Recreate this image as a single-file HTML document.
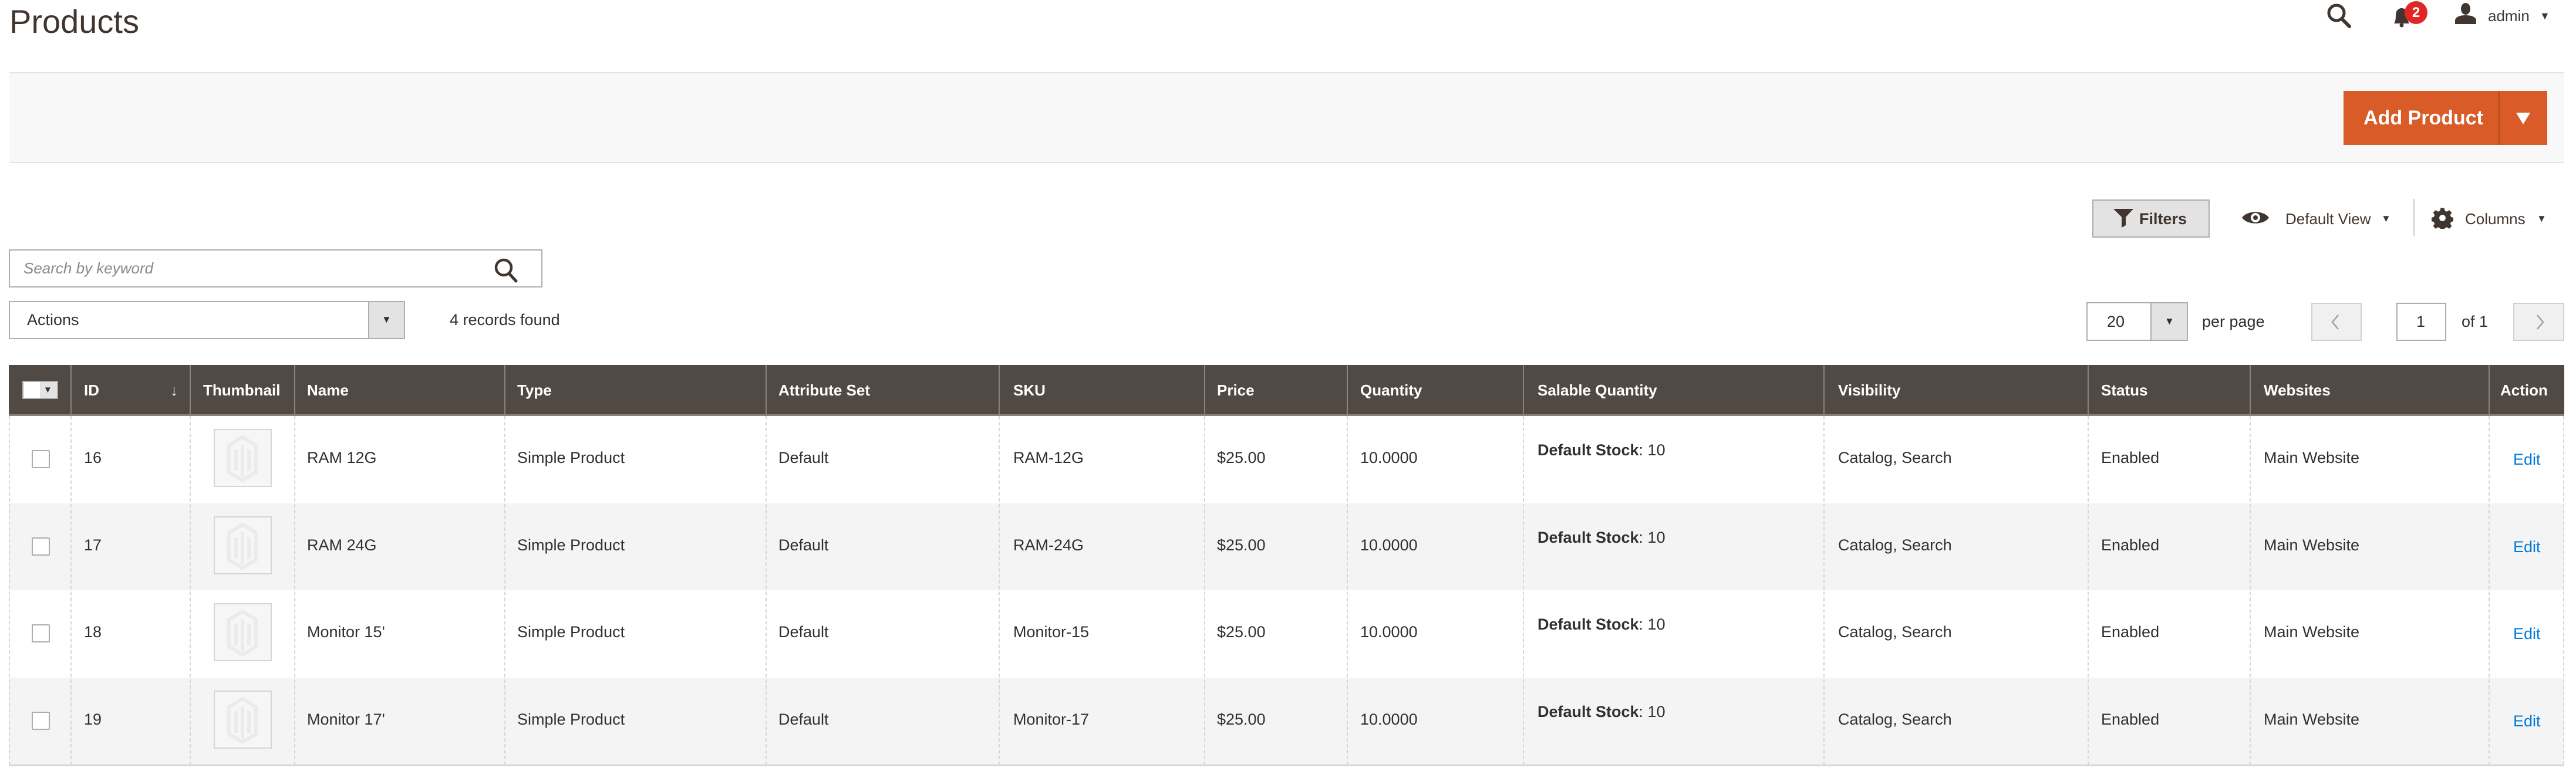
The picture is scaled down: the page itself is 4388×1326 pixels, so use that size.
<!DOCTYPE html>
<html><head><meta charset="utf-8"><style>
*{margin:0;padding:0;box-sizing:border-box}
body{width:4388px;height:1326px;background:#fff;position:relative;overflow:hidden;font-family:"Liberation Sans",Arial,sans-serif;color:#303030;font-size:27px}
.a{position:absolute}
.t{position:absolute;height:40px;line-height:40px;white-space:nowrap}
.hd{color:#fff;font-weight:bold;font-size:26px}
.row{position:absolute;left:15px;width:4353px;height:149px}
.row .t{top:51px}
.cb{position:absolute;left:39px;top:58px;width:31px;height:31px;border:2px solid #adadad;background:#fff;border-radius:2px}
.th{position:absolute;left:349px;top:22px;width:99px;height:99px;border:2px solid #d6d6d6;background:#f6f6f6}
.vl{position:absolute;top:709px;height:595px;border-left:2px dashed #d6d6d6}
.hl{position:absolute;top:622px;height:87px;width:2px;background:#8a837e}
</style></head><body>
<div class="t" style="left:16px;top:4px;height:66px;line-height:66px;font-size:56px;color:#41362f">Products</div>

<!-- top icons -->
<svg class="a" style="left:3962px;top:4px" width="46" height="44" viewBox="0 0 46 44"><circle cx="18" cy="18" r="13" fill="none" stroke="#41362f" stroke-width="5"/><path d="M27 28 L40 41" stroke="#41362f" stroke-width="6" stroke-linecap="round"/></svg>
<svg class="a" style="left:4072px;top:10px" width="40" height="38" viewBox="0 0 40 38"><path d="M6 30 C9 26 9 20 9 15 C9 8 14 4 19 4 C24 4 29 8 29 15 C29 20 29 26 32 30 Z" fill="#41362f"/><circle cx="19" cy="33" r="3.5" fill="#41362f"/></svg>
<div class="a" style="left:4096px;top:2px;width:39px;height:39px;border-radius:50%;background:#e22626;color:#fff;font-weight:bold;font-size:24px;text-align:center;line-height:39px">2</div>
<svg class="a" style="left:4180px;top:5px" width="40" height="36" viewBox="0 0 40 36"><ellipse cx="20" cy="10" rx="8" ry="10" fill="#41362f"/><path d="M2 36 L2 30 C2 24 10 21 20 21 C30 21 38 24 38 30 L38 36 Z" fill="#41362f"/></svg>
<div class="t" style="left:4238px;top:7px;font-size:26px;color:#41362f">admin</div>
<div class="t" style="left:4326px;top:7px;font-size:18px;color:#41362f">▼</div>

<!-- gray bar -->
<div class="a" style="left:16px;top:123px;width:4352px;height:155px;background:#f8f8f8;border-top:2px solid #e3e3e3;border-bottom:2px solid #e3e3e3"></div>
<div class="a" style="left:3992px;top:155px;width:347px;height:92px;background:#d85b28"></div>
<div class="a" style="left:4256px;top:155px;width:2px;height:92px;background:#b44a1e"></div>
<div class="t" style="left:4026px;top:181px;color:#fff;font-weight:bold;font-size:34px">Add Product</div>
<svg class="a" style="left:4286px;top:192px" width="24" height="20" viewBox="0 0 24 20"><path d="M0 0 H24 L12 20 Z" fill="#fff"/></svg>

<!-- toolbar right -->
<div class="a" style="left:3564px;top:340px;width:200px;height:65px;background:#e3e3e3;border:2px solid #adadad"></div>
<svg class="a" style="left:3600px;top:356px" width="35" height="32" viewBox="0 0 35 32"><path d="M0 0 H34 L21 14 V28 L14 32 V14 Z" fill="#41362f"/></svg>
<div class="t" style="left:3644px;top:353px;font-size:27px;font-weight:bold;color:#41362f">Filters</div>
<svg class="a" style="left:3818px;top:356px" width="48" height="30" viewBox="0 0 48 30"><path d="M1 15 C10 2 38 2 47 15 C38 28 10 28 1 15 Z" fill="#41362f"/><circle cx="24" cy="15" r="8" fill="#fff"/><circle cx="24" cy="15" r="4" fill="#41362f"/></svg>
<div class="t" style="left:3893px;top:353px;font-size:26px;color:#41362f">Default View</div>
<div class="t" style="left:4056px;top:353px;font-size:17px;color:#41362f">▼</div>
<div class="a" style="left:4111px;top:339px;width:2px;height:63px;background:#ccc"></div>
<svg class="a" style="left:4142px;top:353px" width="37" height="37" viewBox="0 0 24 24"><path fill="#41362f" d="M10 1h4l.6 3 2.3 1 2.6-1.7 2.8 2.8-1.7 2.6 1 2.3 3 .6v4l-3 .6-1 2.3 1.7 2.6-2.8 2.8-2.6-1.7-2.3 1-.6 3h-4l-.6-3-2.3-1-2.6 1.7-2.8-2.8 1.7-2.6-1-2.3-3-.6v-4l3-.6 1-2.3-1.7-2.6 2.8-2.8 2.6 1.7 2.3-1zM12 8.5a3.5 3.5 0 1 0 0 7 3.5 3.5 0 1 0 0-7z"/></svg>
<div class="t" style="left:4199px;top:353px;font-size:26px;color:#41362f">Columns</div>
<div class="t" style="left:4321px;top:353px;font-size:17px;color:#41362f">▼</div>

<!-- search -->
<div class="a" style="left:15px;top:425px;width:909px;height:65px;border:2px solid #adadad;background:#fff"></div>
<div class="t" style="left:40px;top:437px;font-style:italic;color:#8a8a8a;font-size:26px">Search by keyword</div>
<svg class="a" style="left:838px;top:438px" width="48" height="44" viewBox="0 0 46 44"><circle cx="19" cy="18" r="13" fill="none" stroke="#41362f" stroke-width="4.5"/><path d="M28 28 L40 41" stroke="#41362f" stroke-width="5" stroke-linecap="round"/></svg>

<!-- actions -->
<div class="a" style="left:15px;top:513px;width:675px;height:65px;border:2px solid #adadad;background:#fff"></div>
<div class="a" style="left:627px;top:515px;width:61px;height:61px;background:#e3e3e3;border-left:2px solid #adadad"></div>
<div class="t" style="left:46px;top:525px;font-size:27px">Actions</div>
<div class="t" style="left:650px;top:525px;font-size:17px">▼</div>
<div class="t" style="left:766px;top:525px;font-size:27px">4 records found</div>

<!-- pager -->
<div class="a" style="left:3554px;top:515px;width:173px;height:66px;border:2px solid #adadad;background:#fff"></div>
<div class="a" style="left:3663px;top:517px;width:62px;height:62px;background:#e3e3e3;border-left:2px solid #adadad"></div>
<div class="t" style="left:3589px;top:528px;font-size:27px">20</div>
<div class="t" style="left:3687px;top:528px;font-size:17px">▼</div>
<div class="t" style="left:3751px;top:528px;font-size:27px">per page</div>
<div class="a" style="left:3937px;top:516px;width:86px;height:65px;border:2px solid #d1d1d1;background:#f0f0f0"></div>
<svg class="a" style="left:3970px;top:536px" width="16" height="26" viewBox="0 0 16 26"><path d="M13 1 L3 13 L13 25" fill="none" stroke="#a0a0a0" stroke-width="2.5"/></svg>
<div class="a" style="left:4082px;top:516px;width:85px;height:65px;border:2px solid #adadad;background:#fff"></div>
<div class="t" style="left:4116px;top:528px;font-size:27px">1</div>
<div class="t" style="left:4193px;top:528px;font-size:27px">of 1</div>
<div class="a" style="left:4281px;top:516px;width:87px;height:65px;border:2px solid #d1d1d1;background:#f0f0f0"></div>
<svg class="a" style="left:4319px;top:536px" width="16" height="26" viewBox="0 0 16 26"><path d="M3 1 L13 13 L3 25" fill="none" stroke="#a0a0a0" stroke-width="2.5"/></svg>

<!-- table header -->
<div class="a" style="left:15px;top:622px;width:4353px;height:87px;background:#514943;border-bottom:3px solid #8a8078"></div>
<div class="hl" style="left:120px"></div><div class="hl" style="left:323px"></div><div class="hl" style="left:501px"></div><div class="hl" style="left:859px"></div><div class="hl" style="left:1304px"></div><div class="hl" style="left:1701px"></div><div class="hl" style="left:2051px"></div><div class="hl" style="left:2294px"></div><div class="hl" style="left:2594px"></div><div class="hl" style="left:3106px"></div><div class="hl" style="left:3556px"></div><div class="hl" style="left:3832px"></div><div class="hl" style="left:4239px"></div>
<div class="a" style="left:38px;top:649px;width:61px;height:31px;background:#fff;border:2px solid #adadad"></div>
<div class="a" style="left:68px;top:651px;width:29px;height:27px;background:#e3e3e3"></div>
<div class="t" style="left:74px;top:645px;font-size:15px;color:#303030">▼</div>
<div class="t hd" style="left:143px;top:645px">ID</div>
<div class="t hd" style="left:290px;top:645px;font-weight:normal">↓</div>
<div class="t hd" style="left:346px;top:645px">Thumbnail</div>
<div class="t hd" style="left:523px;top:645px">Name</div>
<div class="t hd" style="left:881px;top:645px">Type</div>
<div class="t hd" style="left:1326px;top:645px">Attribute Set</div>
<div class="t hd" style="left:1726px;top:645px">SKU</div>
<div class="t hd" style="left:2073px;top:645px">Price</div>
<div class="t hd" style="left:2317px;top:645px">Quantity</div>
<div class="t hd" style="left:2619px;top:645px">Salable Quantity</div>
<div class="t hd" style="left:3131px;top:645px">Visibility</div>
<div class="t hd" style="left:3579px;top:645px">Status</div>
<div class="t hd" style="left:3856px;top:645px">Websites</div>
<div class="t hd" style="left:4259px;top:645px">Action</div>

<!-- rows -->
<div class="row" style="top:709px;background:#fff"></div>
<div class="row" style="top:858px;background:#f4f4f4"></div>
<div class="row" style="top:1006px;background:#fff"></div>
<div class="row" style="top:1155px;background:#f4f4f4;height:149px"></div>
<div class="a" style="left:15px;top:1303px;width:4353px;height:3px;background:#d6d6d6"></div>
<div class="vl" style="left:15px"></div><div class="vl" style="left:120px"></div><div class="vl" style="left:323px"></div><div class="vl" style="left:501px"></div><div class="vl" style="left:859px"></div><div class="vl" style="left:1304px"></div><div class="vl" style="left:1701px"></div><div class="vl" style="left:2051px"></div><div class="vl" style="left:2294px"></div><div class="vl" style="left:2594px"></div><div class="vl" style="left:3106px"></div><div class="vl" style="left:3556px"></div><div class="vl" style="left:3832px"></div><div class="vl" style="left:4239px"></div><div class="vl" style="left:4366px"></div>

<div class="row" style="top:709px">
<div class="cb"></div><div class="t" style="left:128px">16</div>
<div class="th"><svg width="95" height="95" viewBox="0 0 95 95"><path d="M47 12 L70 26 V72 L47 86 L24 72 V26 Z M36 33 V70 M58 33 V70 M47 25 V80" fill="none" stroke="#ebebeb" stroke-width="6"/></svg></div>
<div class="t" style="left:508px">RAM 12G</div><div class="t" style="left:866px">Simple Product</div><div class="t" style="left:1311px">Default</div><div class="t" style="left:1711px">RAM-12G</div><div class="t" style="left:2058px">$25.00</div><div class="t" style="left:2302px">10.0000</div><div class="t" style="left:2604px;top:38px"><b>Default Stock</b>: 10</div><div class="t" style="left:3116px">Catalog, Search</div><div class="t" style="left:3564px">Enabled</div><div class="t" style="left:3841px">Main Website</div><div class="t" style="left:4266px;top:54px;color:#007bdb">Edit</div>
</div>
<div class="row" style="top:858px">
<div class="cb"></div><div class="t" style="left:128px">17</div>
<div class="th"><svg width="95" height="95" viewBox="0 0 95 95"><path d="M47 12 L70 26 V72 L47 86 L24 72 V26 Z M36 33 V70 M58 33 V70 M47 25 V80" fill="none" stroke="#ebebeb" stroke-width="6"/></svg></div>
<div class="t" style="left:508px">RAM 24G</div><div class="t" style="left:866px">Simple Product</div><div class="t" style="left:1311px">Default</div><div class="t" style="left:1711px">RAM-24G</div><div class="t" style="left:2058px">$25.00</div><div class="t" style="left:2302px">10.0000</div><div class="t" style="left:2604px;top:38px"><b>Default Stock</b>: 10</div><div class="t" style="left:3116px">Catalog, Search</div><div class="t" style="left:3564px">Enabled</div><div class="t" style="left:3841px">Main Website</div><div class="t" style="left:4266px;top:54px;color:#007bdb">Edit</div>
</div>
<div class="row" style="top:1006px">
<div class="cb"></div><div class="t" style="left:128px">18</div>
<div class="th"><svg width="95" height="95" viewBox="0 0 95 95"><path d="M47 12 L70 26 V72 L47 86 L24 72 V26 Z M36 33 V70 M58 33 V70 M47 25 V80" fill="none" stroke="#ebebeb" stroke-width="6"/></svg></div>
<div class="t" style="left:508px">Monitor 15'</div><div class="t" style="left:866px">Simple Product</div><div class="t" style="left:1311px">Default</div><div class="t" style="left:1711px">Monitor-15</div><div class="t" style="left:2058px">$25.00</div><div class="t" style="left:2302px">10.0000</div><div class="t" style="left:2604px;top:38px"><b>Default Stock</b>: 10</div><div class="t" style="left:3116px">Catalog, Search</div><div class="t" style="left:3564px">Enabled</div><div class="t" style="left:3841px">Main Website</div><div class="t" style="left:4266px;top:54px;color:#007bdb">Edit</div>
</div>
<div class="row" style="top:1155px">
<div class="cb"></div><div class="t" style="left:128px">19</div>
<div class="th"><svg width="95" height="95" viewBox="0 0 95 95"><path d="M47 12 L70 26 V72 L47 86 L24 72 V26 Z M36 33 V70 M58 33 V70 M47 25 V80" fill="none" stroke="#ebebeb" stroke-width="6"/></svg></div>
<div class="t" style="left:508px">Monitor 17'</div><div class="t" style="left:866px">Simple Product</div><div class="t" style="left:1311px">Default</div><div class="t" style="left:1711px">Monitor-17</div><div class="t" style="left:2058px">$25.00</div><div class="t" style="left:2302px">10.0000</div><div class="t" style="left:2604px;top:38px"><b>Default Stock</b>: 10</div><div class="t" style="left:3116px">Catalog, Search</div><div class="t" style="left:3564px">Enabled</div><div class="t" style="left:3841px">Main Website</div><div class="t" style="left:4266px;top:54px;color:#007bdb">Edit</div>
</div>
</body></html>
